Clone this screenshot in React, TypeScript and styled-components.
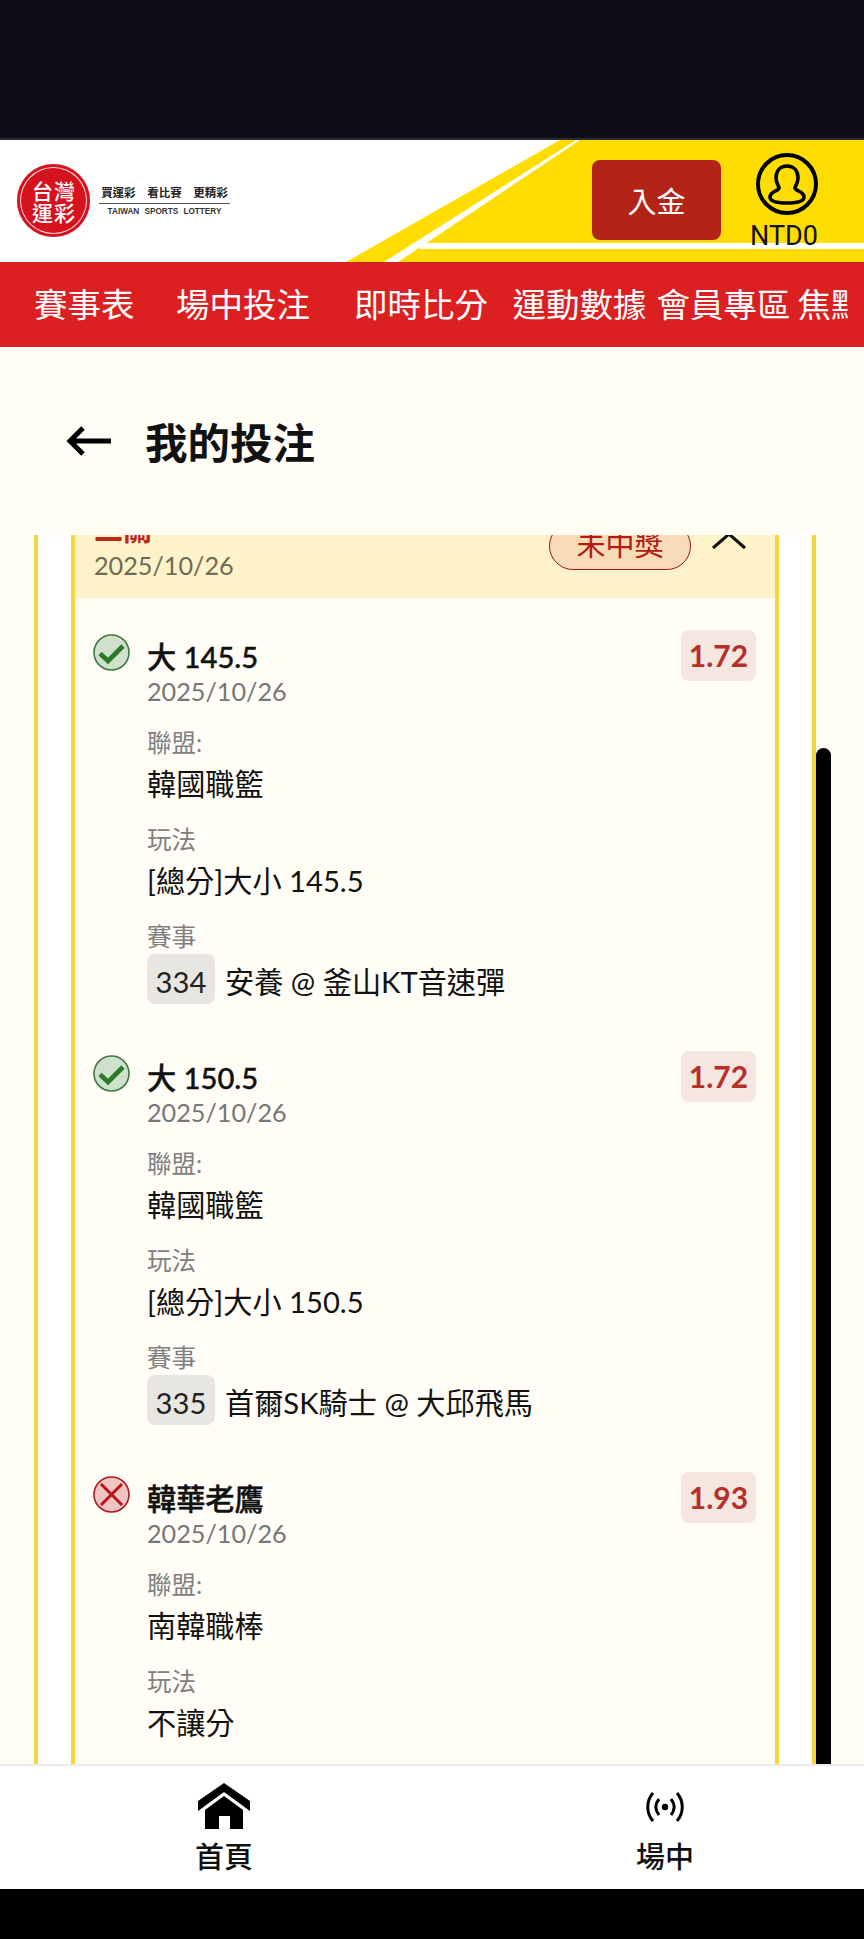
import React from "react";
import styled, { createGlobalStyle } from "styled-components";

const Global = createGlobalStyle`
  html, body { margin: 0; padding: 0; background: #000; }
  body { font-family: Lato, "Noto Sans CJK TC", sans-serif; overflow: hidden; }
  * { box-sizing: border-box; }
`;

const Screen = styled.div`
  width: 864px; height: 1939px; display: flex; flex-direction: column;
  background: #fffdf6; overflow: hidden;
`;
const StatusBar = styled.div`
  height: 140px; flex: none; background: #0e0f16; border-bottom: 2px solid #2a2b33;
`;
const Header = styled.header`
  position: relative; height: 122px; flex: none; background: #fff;
  display: flex; align-items: flex-start; overflow: hidden;
`;
const HeaderArt = styled.svg`
  position: absolute; inset: 0; width: 864px; height: 122px;
`;
const Logo = styled.div`
  position: relative; display: flex; align-items: center; gap: 9px;
  margin: 24px 0 0 17px;
`;
const Seal = styled.div`
  width: 73px; height: 73px; border-radius: 50%; background: #d5121e; color: #fff;
  box-shadow: inset 0 0 0 3px #d5121e, inset 0 0 0 4px #fbdcdc;
  display: grid; grid-template-columns: 22px 22px; grid-auto-rows: 22px; justify-content: center; align-content: center;
  font: 500 21px/22px "Noto Sans CJK TC", sans-serif; text-align: center;
`;
const LogoText = styled.div`
  display: flex; flex-direction: column; align-items: center; width: 131px; margin-top: 2px;
`;
const Slogan = styled.div`
  font: 700 11.5px/15px "Noto Sans CJK TC", sans-serif; color: #222; word-spacing: 9px;
  border-bottom: 1px solid #555; width: 100%; text-align: center; padding-bottom: 3px; white-space: nowrap;
`;
const LogoEn = styled.div`
  font: 700 8.2px/12px "Liberation Sans", sans-serif; color: #333; word-spacing: 3px; margin-top: 2px; white-space: nowrap;
`;
const Deposit = styled.button`
  position: relative; margin: 20px 0 0 auto; width: 129px; height: 80px; border: 0; border-radius: 8px;
  background: #b32317; color: #fff; font: 400 29px "Noto Sans CJK TC", sans-serif; padding: 0;
`;
const Account = styled.div`
  position: relative; width: 68px; margin: 12px 46px 0 29px; display: flex; flex-direction: column; align-items: center;
`;
const Avatar = styled.svg`
  display: block; flex: none; margin-left: 5px;
`;
const Balance = styled.div`
  font: 400 27px/32px Roboto, sans-serif; color: #111; margin-top: 4px; white-space: nowrap;
`;
const Nav = styled.nav`
  height: 85px; flex: none; background: #dc1f21; display: flex; align-items: center;
  padding: 0 16px 3px 34px;
`;
const NavTrack = styled.div`
  flex: 1; min-width: 0; display: flex; overflow: hidden;
`;
const NavItem = styled.span<{ $gap: number }>`
  flex: none; margin-left: ${(p) => p.$gap}px; color: #fff;
  font: 400 33.5px/50px "Noto Sans CJK TC", sans-serif; white-space: nowrap;
`;
const TitleBar = styled.div`
  height: 188px; flex: none; background: #fffdf6; display: flex; align-items: center;
  padding: 0 0 0 66px; gap: 34px;
`;
const PageTitle = styled.h1`
  margin: 0; font: 700 42.5px/62px "Noto Sans CJK TC", sans-serif; color: #111;
`;
const Scroll = styled.div`
  position: relative; flex: 1; min-height: 0; overflow: hidden; padding: 0 48px 0 34px;
`;
const Bar = styled.div`
  position: absolute; top: 213px; right: 33px; bottom: 0; width: 15px; background: #000;
  border-radius: 8px 8px 0 0;
`;
const OuterCard = styled.div`
  height: 100%; background: #fff; border: solid #f6d63f; border-width: 0 4px;
  padding: 0 33px;
`;
const Ticket = styled.div`
  height: 100%; background: #fffdf6; border: solid #f6d63f; border-width: 0 4px;
`;
const TicketHead = styled.div`
  height: 63px; background: #fdf2c8; position: relative; padding: 0 18px 0 19px; display: flex; align-items: flex-start; justify-content: space-between; overflow: hidden;
`;
const HeadLeft = styled.div`
  margin-top: -27px; display: flex; flex-direction: column;
`;
const HeadTitle = styled.div`
  font: 700 29px/40px "Noto Sans CJK TC", sans-serif; color: #b92a1d;
`;
const HeadDate = styled.div`
  font: 400 25.2px/36px Lato, sans-serif; color: #6e6a55; margin-top: -1px;
`;
const HeadRight = styled.div`
  display: flex; align-items: flex-start; gap: 20px; margin-right: 10px;
`;
const Status = styled.div`
  width: 142px; height: 48px; margin-top: -13px; border: 1.5px solid #9c160e; border-radius: 24px;
  background: #f8dcb8; color: #b21a12; text-align: center; font: 400 29px/41px "Noto Sans CJK TC", sans-serif;
`;
const Chevron = styled.svg`
  width: 36px; height: 18px; margin-top: -2px; flex: none;
`;
const Selection = styled.div`
  position: relative; padding: 32px 18px 0 72px; height: 421px;
`;
const Mark = styled.svg`
  position: absolute; left: 18px; top: 36px; width: 37px; height: 37px;
`;
const Odds = styled.div`
  position: absolute; right: 19px; top: 32px; width: 75px; height: 51px; border-radius: 8px;
  background: #f5e6e0; color: #b5302a; text-align: center; font: 700 30px/51px Lato, sans-serif;
`;
const SelName = styled.div`
  font: 500 29.2px/40px Lato, "Noto Sans CJK TC", sans-serif; color: #111; margin-top: 7px;
  -webkit-text-stroke: 0.4px #111;
`;
const SelDate = styled.div`
  font: 400 25.2px/30px Lato, sans-serif; color: #777; margin-top: -1px;
`;
const Label = styled.div`
  font: 400 24.5px/36px Lato, "Noto Sans CJK TC", sans-serif; color: #808080;
`;
const Value = styled.div`
  font: 400 29.2px/44px Lato, "Noto Sans CJK TC", sans-serif; color: #111; margin-top: 1px;
`;
const Field = styled.div`
  margin-top: 19px;
  & + & { margin-top: 16px; }
`;
const MatchRow = styled.div`
  display: flex; align-items: flex-start; gap: 10px; margin-top: -1px;
  font: 400 29.2px/56px Lato, "Noto Sans CJK TC", sans-serif; color: #111;
`;
const Code = styled.span`
  width: 68px; height: 50px; background: #e8e6e0; border-radius: 8px; text-align: center; font: 400 29.2px/56px Lato, sans-serif; color: #222;
`;
const Tabs = styled.nav`
  height: 125px; flex: none; background: #fff; border-top: 2px solid #eceae4; display: grid; grid-template-columns: 448px 398px; justify-content: space-between;
`;
const Tab = styled.div`
  display: flex; flex-direction: column; align-items: center; justify-content: flex-end; padding-bottom: 14px;
  font: 500 29px/40px "Noto Sans CJK TC", sans-serif; color: #111;
`;
const HomeGlyph = styled.svg`
  display: block; margin-bottom: 6px;
`;
const LiveGlyph = styled.svg`
  display: block; margin-bottom: 12px;
`;
const HomeBar = styled.div`
  height: 50px; flex: none; background: #000;
`;

const Check = () => (
  <Mark viewBox="0 0 37 37">
    <circle cx="18.5" cy="18.5" r="17.5" fill="#cfe0cb" stroke="#3f7a45" strokeWidth="1.6" />
    <path d="M7 19.5l8 7.5L30 12" fill="none" stroke="#2b7a2b" strokeWidth="4.6" />
  </Mark>
);
const Cross = () => (
  <Mark viewBox="0 0 37 37">
    <circle cx="18.5" cy="18.5" r="17.5" fill="#f0c4c0" stroke="#a81c22" strokeWidth="1.6" />
    <path d="M8 8l21 21M29 8L8 29" fill="none" stroke="#b8141c" strokeWidth="3" />
  </Mark>
);

type Sel = { ok: boolean; name: string; odds: string; league: string; play: string; code?: string; match?: string };
const selections: Sel[] = [
  { ok: true, name: "大 145.5", odds: "1.72", league: "韓國職籃", play: "[總分]大小 145.5", code: "334", match: "安養 @ 釜山KT音速彈" },
  { ok: true, name: "大 150.5", odds: "1.72", league: "韓國職籃", play: "[總分]大小 150.5", code: "335", match: "首爾SK騎士 @ 大邱飛馬" },
  { ok: false, name: "韓華老鷹", odds: "1.93", league: "南韓職棒", play: "不讓分" },
];

export default function App() {
  return (
    <Screen>
      <Global />
      <StatusBar />
      <Header>
        <HeaderArt viewBox="0 0 864 122">
          <polygon points="346,122 560,0 864,0 864,122" fill="#ffdd00" />
          <polygon points="384,122 398,122 580,0 576,0" fill="#fff" />
          <rect x="420" y="103" width="444" height="6" fill="#fff" />
        </HeaderArt>
        <Logo>
          <Seal><span>台</span><span>灣</span><span>運</span><span>彩</span></Seal>
          <LogoText>
            <Slogan>買運彩 看比賽 更精彩</Slogan>
            <LogoEn>TAIWAN SPORTS LOTTERY</LogoEn>
          </LogoText>
        </Logo>
        <Deposit>入金</Deposit>
        <Account>
          <Avatar width="64" height="64" viewBox="0 0 64 64">
            <circle cx="32" cy="32" r="29" fill="none" stroke="#000" strokeWidth="4" />
            <path d="M32 14C25 14 21 19 21 26C21 31 24 34 24 36C24 39 15 39 15 45C15 50 24 51 32 51C40 51 49 50 49 45C49 39 40 39 40 36C40 34 43 31 43 26C43 19 39 14 32 14Z" fill="none" stroke="#000" strokeWidth="3.6" />
          </Avatar>
          <Balance>NTD0</Balance>
        </Account>
      </Header>
      <Nav>
        <NavTrack>
          <NavItem $gap={0}>賽事表</NavItem>
          <NavItem $gap={41.5}>場中投注</NavItem>
          <NavItem $gap={44}>即時比分</NavItem>
          <NavItem $gap={24.5}>運動數據</NavItem>
          <NavItem $gap={10}>會員專區</NavItem>
          <NavItem $gap={7}>焦點</NavItem>
        </NavTrack>
      </Nav>
      <TitleBar>
        <svg width="45" height="32" viewBox="0 0 45 32">
          <path d="M45 16H4M17 3L4 16l13 13" fill="none" stroke="#000" strokeWidth="5" />
        </svg>
        <PageTitle>我的投注</PageTitle>
      </TitleBar>
      <Scroll>
        <OuterCard>
          <Ticket>
            <TicketHead>
              <HeadLeft>
                <HeadTitle>二關</HeadTitle>
                <HeadDate>2025/10/26</HeadDate>
              </HeadLeft>
              <HeadRight>
                <Status>未中獎</Status>
                <Chevron viewBox="0 0 36 18">
                  <path d="M2 15L18 1l16 14" fill="none" stroke="#111" strokeWidth="3" />
                </Chevron>
              </HeadRight>
            </TicketHead>
            {selections.map((s) => (
              <Selection key={s.name}>
                {s.ok ? <Check /> : <Cross />}
                <Odds>{s.odds}</Odds>
                <SelName>{s.name}</SelName>
                <SelDate>2025/10/26</SelDate>
                <Field>
                  <Label>聯盟:</Label>
                  <Value>{s.league}</Value>
                </Field>
                <Field>
                  <Label>玩法</Label>
                  <Value>{s.play}</Value>
                </Field>
                {s.code && (
                  <Field>
                    <Label>賽事</Label>
                    <MatchRow><Code>{s.code}</Code>{s.match}</MatchRow>
                  </Field>
                )}
              </Selection>
            ))}
          </Ticket>
        </OuterCard>
        <Bar />
      </Scroll>
      <Tabs>
        <Tab>
          <HomeGlyph width="52" height="46" viewBox="0 0 52 46">
            <path fillRule="evenodd" d="M26 0L52 18V28L26 9L0 28V18ZM26 13L45 27V46H32V33H21V46H7V27Z" fill="#000" />
          </HomeGlyph>
          首頁
        </Tab>
        <Tab>
          <LiveGlyph width="38" height="32" viewBox="0 0 38 32">
            <circle cx="19" cy="16" r="3.2" fill="#000" />
            <path d="M13 8C9 13 9 19 13 24M25 8C29 13 29 19 25 24M7 2C0 10 0 22 7 30M31 2C38 10 38 22 31 30" fill="none" stroke="#000" strokeWidth="3" />
          </LiveGlyph>
          場中
        </Tab>
      </Tabs>
      <HomeBar />
    </Screen>
  );
}
